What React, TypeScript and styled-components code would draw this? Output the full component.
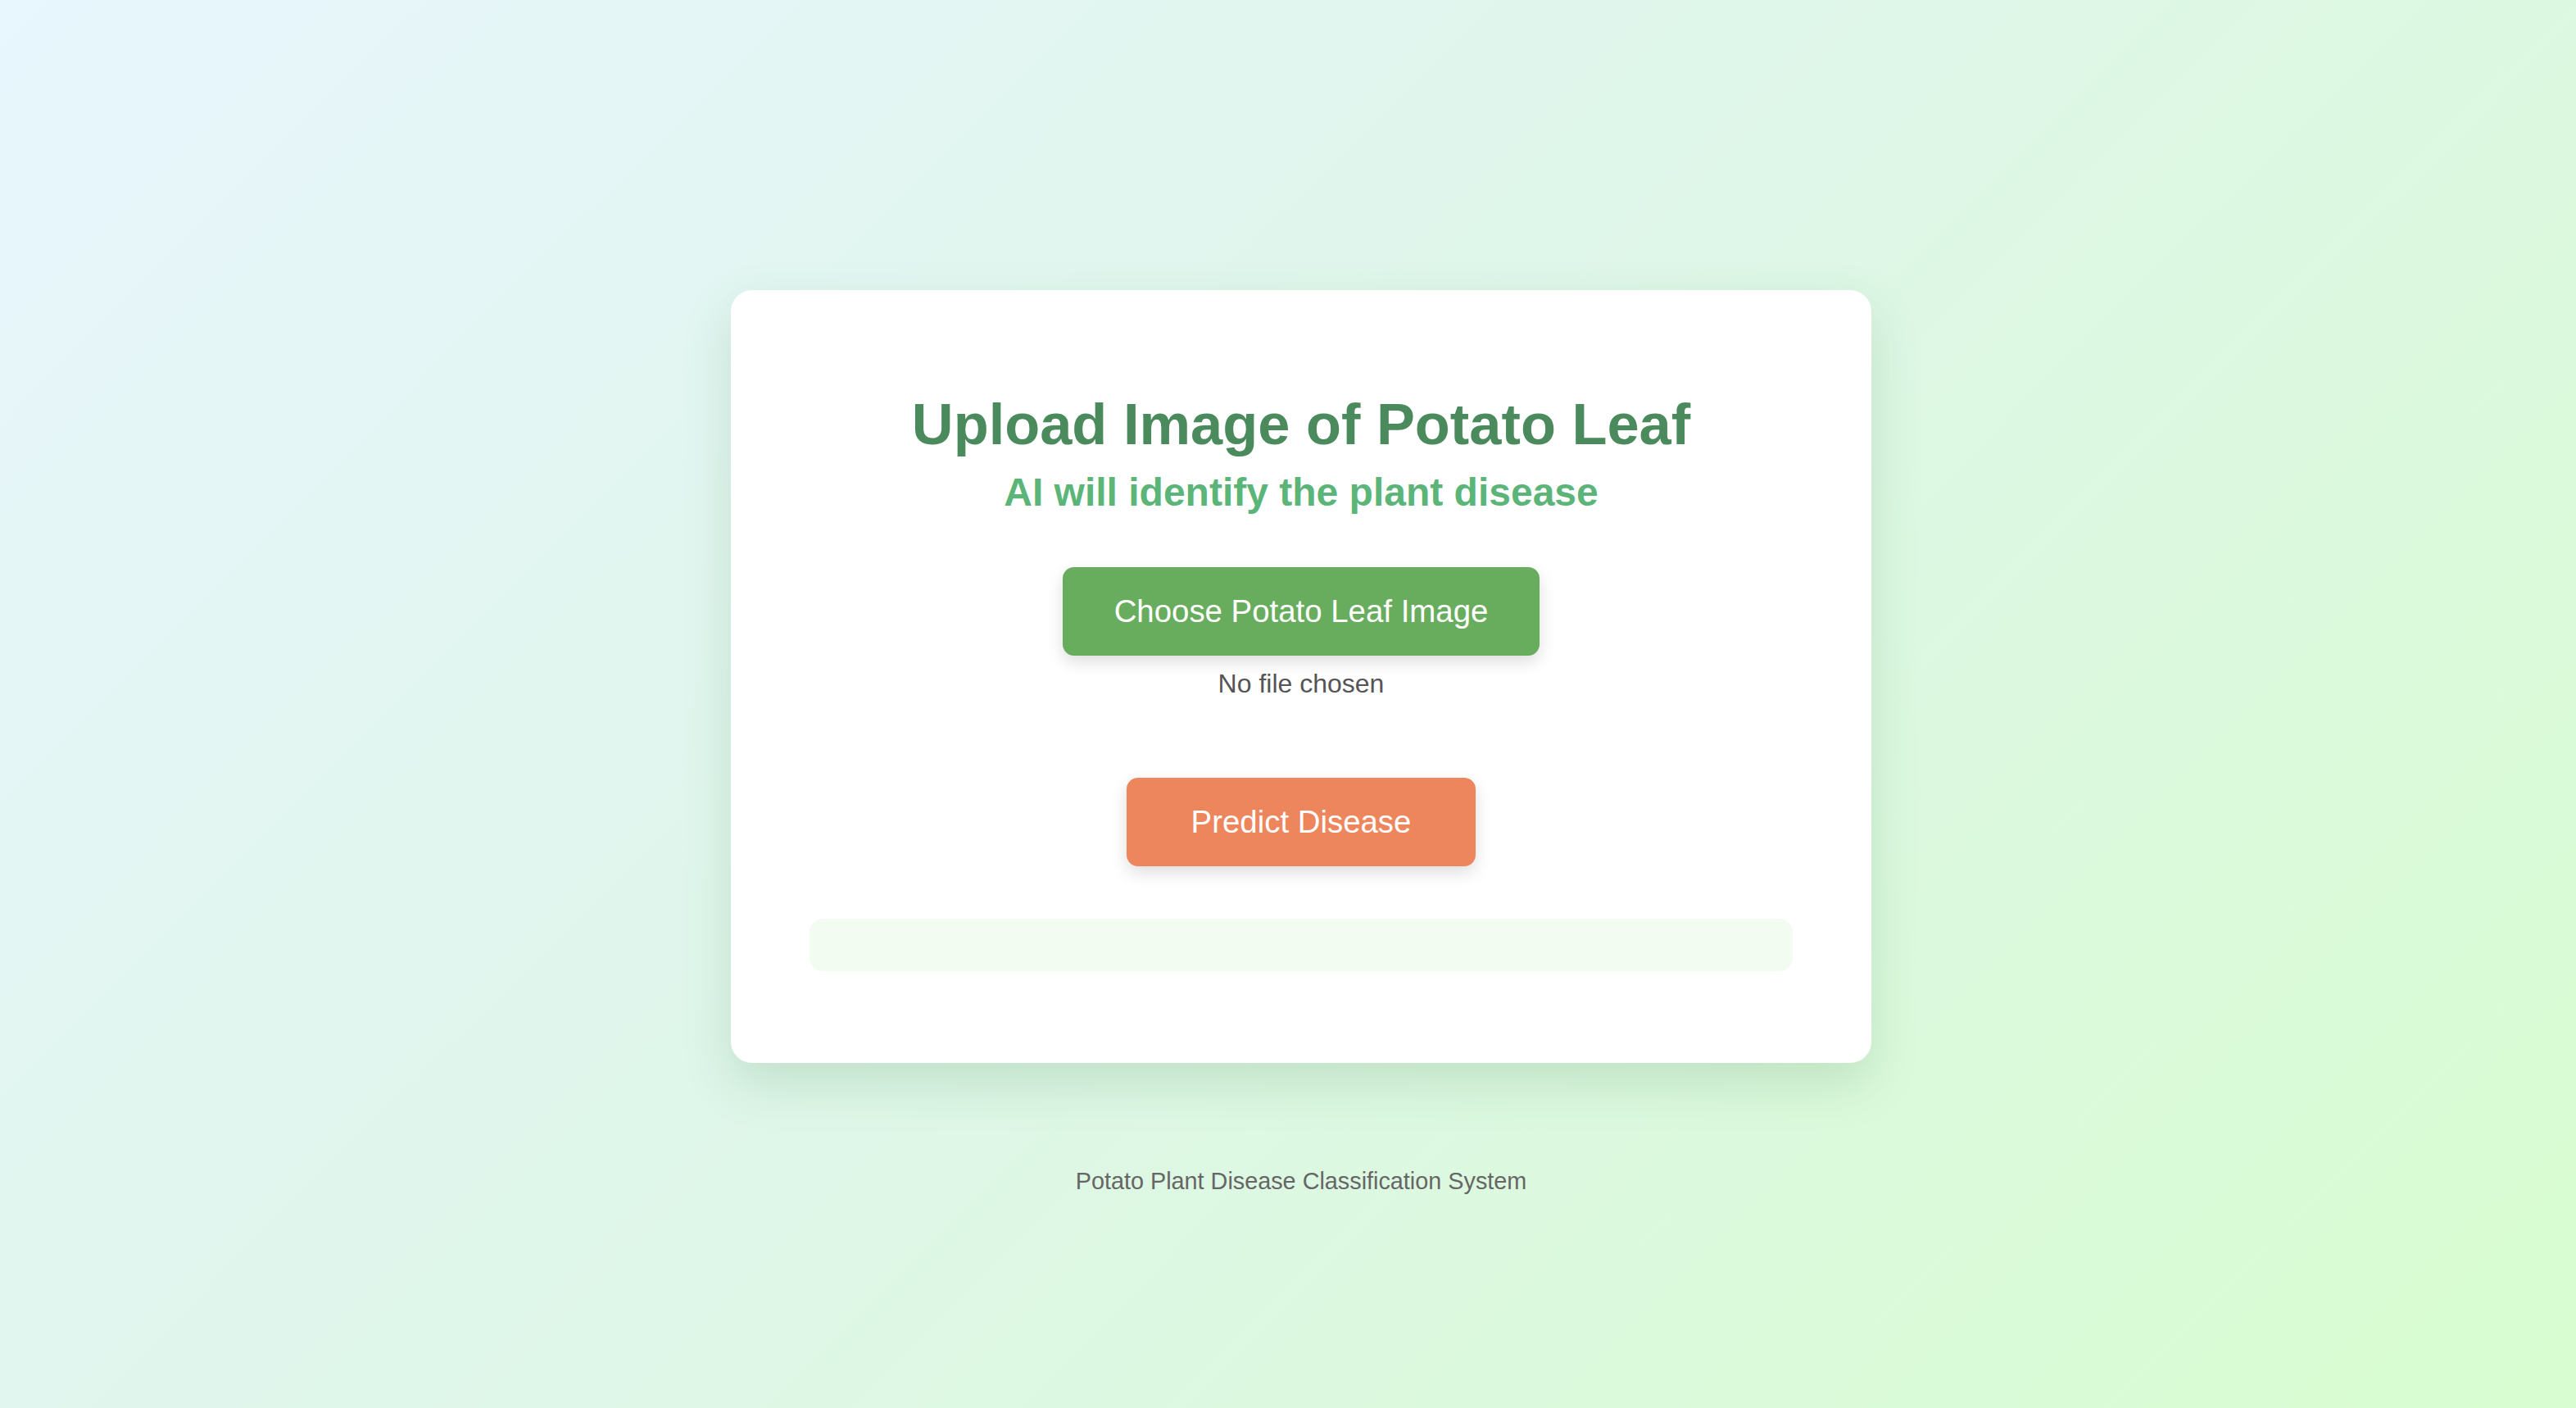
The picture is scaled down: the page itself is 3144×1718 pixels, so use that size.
import React from "react";
import styled, { createGlobalStyle, css } from "styled-components";

const GlobalStyle = createGlobalStyle`
  html, body {
    margin: 0;
    padding: 0;
  }
  body {
    font-family: "Liberation Sans", Arial, sans-serif;
  }
  * { box-sizing: border-box; }
`;

const Page = styled.div`
  min-height: 100vh;
  width: 100%;
  background: linear-gradient(135deg, #e8f6fd 0%, #dff6ea 45%, #d8fdd0 100%);
  display: flex;
  flex-direction: column;
  align-items: center;
  padding: 354px 0 0 32px;
`;

const Card = styled.main`
  width: 1392px;
  background: #ffffff;
  border-radius: 26px;
  padding: 125px 96px 112px;
  display: flex;
  flex-direction: column;
  align-items: center;
  box-shadow: 0 24px 60px rgba(60, 130, 70, 0.18);
`;

const Title = styled.h1`
  margin: 0;
  font-size: 70.4px;
  font-weight: 700;
  line-height: 78.6px;
  color: #4a8a5c;
  text-align: center;
`;

const Subtitle = styled.h2`
  margin: 16px 0 0;
  font-size: 48px;
  font-weight: 700;
  line-height: 53.6px;
  color: #5cb578;
  text-align: center;
`;

const HiddenInput = styled.input`
  display: none;
`;

const buttonBase = css<{ $bg: string; $px: number }>`
  display: inline-block;
  border: none;
  font-family: inherit;
  background: ${(p) => p.$bg};
  color: #ffffff;
  font-size: 38.4px;
  line-height: 44px;
  padding: 32px ${(p) => p.$px}px;
  border-radius: 14px;
  box-shadow: 0 8px 20px rgba(0, 0, 0, 0.13);
  cursor: pointer;
  white-space: nowrap;
`;

const ChooseLabel = styled.label<{ $bg: string; $px: number }>`
  ${buttonBase}
`;

const PredictButton = styled.button<{ $bg: string; $px: number }>`
  ${buttonBase}
`;

const UploadGroup = styled.div`
  margin-top: 65px;
  display: flex;
  flex-direction: column;
  align-items: center;
  gap: 16px;
`;

const FileName = styled.span`
  font-size: 32px;
  line-height: 36px;
  color: #555555;
`;

const PredictWrap = styled.div`
  margin-top: 97px;
`;

const ResultBox = styled.div`
  margin-top: 64px;
  width: 100%;
  height: 64px;
  background: #f2fcf0;
  border-radius: 16px;
`;

const Footer = styled.footer`
  margin-top: 128px;
  font-size: 28.8px;
  line-height: 32px;
  color: #666666;
  text-align: center;
`;

export default function App() {
  return (
    <>
      <GlobalStyle />
      <Page>
        <Card>
          <Title>Upload Image of Potato Leaf</Title>
          <Subtitle>AI will identify the plant disease</Subtitle>
          <UploadGroup>
            <ChooseLabel $bg="#68ad5e" $px={63} htmlFor="leaf">
              Choose Potato Leaf Image
            </ChooseLabel>
            <HiddenInput id="leaf" type="file" accept="image/*" />
            <FileName>No file chosen</FileName>
          </UploadGroup>
          <PredictWrap>
            <PredictButton $bg="#ee865d" $px={79} type="button">
              Predict Disease
            </PredictButton>
          </PredictWrap>
          <ResultBox />
        </Card>
        <Footer>Potato Plant Disease Classification System</Footer>
      </Page>
    </>
  );
}
